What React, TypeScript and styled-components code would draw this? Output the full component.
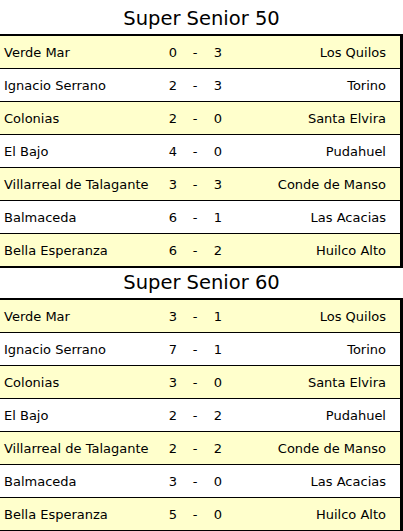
import React from "react";
import styled, { createGlobalStyle } from "styled-components";

const Global = createGlobalStyle`
  html, body { margin: 0; padding: 0; background: #fff; }
  body { font-family: "DejaVu Sans", Verdana, sans-serif; color: #000; }
`;

const Page = styled.div`
  width: 403px;
  padding-top: 4px;
  display: flex;
  flex-direction: column;
`;

const Title = styled.h2`
  margin: 0;
  height: 30px;
  line-height: 30px;
  text-align: center;
  font-size: 19.5px;
  font-weight: normal;
  color: #000;
`;

const Table = styled.div`
  display: flex;
  flex-direction: column;
  border-top: 2px solid #000;
  border-right: 3px solid #000;
  border-bottom: 2px solid #000;
`;

const Row = styled.div<{ $alt: boolean }>`
  display: grid;
  grid-template-columns: 163px 20px 24px 22px 1fr;
  align-items: center;
  height: 32px;
  background: ${(p) => (p.$alt ? "#ffffcc" : "#ffffff")};
  font-size: 13px;
  & + & { border-top: 1px solid #000; }
`;

const Home = styled.span`
  padding-left: 4px;
  white-space: nowrap;
`;

const Cell = styled.span`
  text-align: center;
`;

const Away = styled.span`
  text-align: right;
  padding-right: 14px;
  white-space: nowrap;
`;

type Match = [string, number, number, string];

const s50: Match[] = [
  ["Verde Mar", 0, 3, "Los Quilos"],
  ["Ignacio Serrano", 2, 3, "Torino"],
  ["Colonias", 2, 0, "Santa Elvira"],
  ["El Bajo", 4, 0, "Pudahuel"],
  ["Villarreal de Talagante", 3, 3, "Conde de Manso"],
  ["Balmaceda", 6, 1, "Las Acacias"],
  ["Bella Esperanza", 6, 2, "Huilco Alto"],
];

const s60: Match[] = [
  ["Verde Mar", 3, 1, "Los Quilos"],
  ["Ignacio Serrano", 7, 1, "Torino"],
  ["Colonias", 3, 0, "Santa Elvira"],
  ["El Bajo", 2, 2, "Pudahuel"],
  ["Villarreal de Talagante", 2, 2, "Conde de Manso"],
  ["Balmaceda", 3, 0, "Las Acacias"],
  ["Bella Esperanza", 5, 0, "Huilco Alto"],
];

function Section({ title, matches }: { title: string; matches: Match[] }) {
  return (
    <>
      <Title>{title}</Title>
      <Table>
        {matches.map((m, i) => (
          <Row key={i} $alt={i % 2 === 0}>
            <Home>{m[0]}</Home>
            <Cell>{m[1]}</Cell>
            <Cell>-</Cell>
            <Cell>{m[2]}</Cell>
            <Away>{m[3]}</Away>
          </Row>
        ))}
      </Table>
    </>
  );
}

export default function App() {
  return (
    <Page>
      <Global />
      <Section title="Super Senior 50" matches={s50} />
      <Section title="Super Senior 60" matches={s60} />
    </Page>
  );
}
